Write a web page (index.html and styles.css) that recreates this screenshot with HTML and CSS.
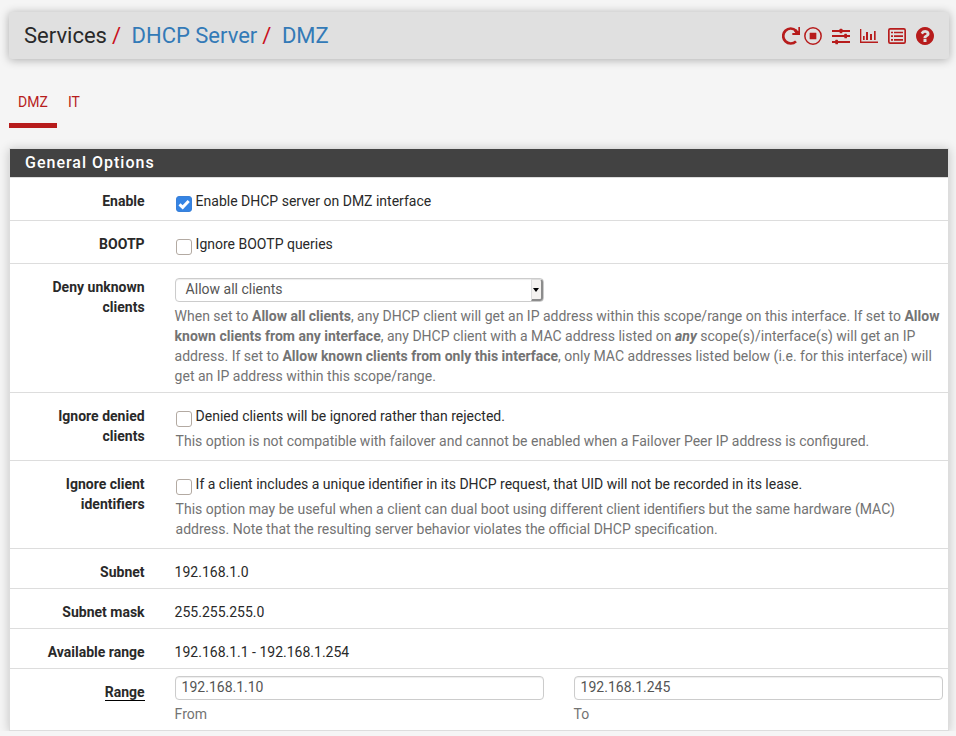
FILE: index.html
```
<!DOCTYPE html>
<html lang="en">
<head>
<meta charset="utf-8">
<title>Services: DHCP Server: DMZ</title>
<link rel="stylesheet" href="styles.css">
</head>
<body>
<header class="topbar">
  <h1 class="crumbs"><span>Services</span><i>/</i><a>DHCP Server</a><i>/</i><a>DMZ</a></h1>
  <nav class="icons">
    <svg viewBox="0 0 54 54"><path d="M42 43A22.500 22.500 0 1 1 42 11" fill="none" stroke="currentColor" stroke-width="8"/><path d="M49 0h5v24H31v-6h9l-4-5 6-6 7 6z"/></svg>
    <svg viewBox="0 0 54 54"><circle cx="27" cy="27" r="24.500" fill="none" stroke="currentColor" stroke-width="4.500"/><rect x="17" y="17" width="20" height="20" rx="1"/></svg>
    <svg viewBox="0 0 54 54"><path d="M0 9h54v6H0zM0 24h54v6H0zM0 42h54v6H0z"/><rect x="23" y="5" width="8" height="14" rx="2"/><rect x="37" y="20" width="8" height="14" rx="2"/><rect x="10" y="38" width="8" height="14" rx="2"/></svg>
    <svg viewBox="0 0 54 54"><path d="M0 6h4v37.500H54V48H0zM9 27h5v12H9zM18 15h6v24h-6zM30 21h6v18h-6zM42 12h5v27h-5z"/></svg>
    <svg viewBox="0 0 54 54"><rect x="2.500" y="5.500" width="49" height="43" rx="4" fill="none" stroke="currentColor" stroke-width="5"/><path d="M9 14h6v5H9zM18 14h27v5H18zM9 25h6v5H9zM18 25h27v5H18zM9 36h6v5H9zM18 36h27v5H18z"/></svg>
    <svg viewBox="128 128 1536 1536"><path d="M1024 1376v-192q0-14-9-23t-23-9h-192q-14 0-23 9t-9 23v192q0 14 9 23t23 9h192q14 0 23-9t9-23zm256-672q0-88-55.500-163t-138.500-116-170-41q-243 0-371 213-15 24 8 42l132 100q7 6 19 6 16 0 25-12 53-68 86-92 34-24 86-24 48 0 85.500 26t37.500 59q0 38-20 61t-68 45q-63 28-115.500 86.500t-52.500 125.500v36q0 14 9 23t23 9h192q14 0 23-9t9-23q0-19 21.500-49.500t54.500-49.500q32-18 49-28.500t46-35 44.500-48 28-60.500 12.500-81zm384 192q0 209-103 385.500t-279.500 279.500-385.500 103-385.500-103-279.500-279.500-103-385.500 103-385.500 279.500-279.500 385.500-103 385.500 103 279.500 279.500 103 385.500z"/></svg>
  </nav>
</header>
<nav class="tabs"><a class="active">DMZ</a><a>IT</a></nav>
<main class="panel">
  <h2>General Options</h2>
  <section class="row h43"><b class="label">Enable</b><div class="field"><label class="check"><span class="box on"><svg viewBox="0 0 16 16"><path d="M3.500 8.300l3.200 3 6-6.300"/></svg></span>Enable DHCP server on DMZ interface</label></div></section>
  <section class="row h43"><b class="label">BOOTP</b><div class="field"><label class="check"><span class="box"></span>Ignore BOOTP queries</label></div></section>
  <section class="row h129"><b class="label">Deny unknown<br>clients</b><div class="field">
    <div class="select"><span>Allow all clients</span><span class="arrow"></span></div>
    <p class="help">When set to <b>Allow all clients</b>, any DHCP client will get an IP address within this scope/range on this interface. If set to <b>Allow<br>known clients from any interface</b>, any DHCP client with a MAC address listed on <b><em>any</em></b> scope(s)/interface(s) will get an IP<br>address. If set to <b>Allow known clients from only this interface</b>, only MAC addresses listed below (i.e. for this interface) will<br>get an IP address within this scope/range.</p></div></section>
  <section class="row h68"><b class="label">Ignore denied<br>clients</b><div class="field"><label class="check"><span class="box"></span>Denied clients will be ignored rather than rejected.</label>
    <p class="help under">This option is not compatible with failover and cannot be enabled when a Failover Peer IP address is configured.</p></div></section>
  <section class="row h88"><b class="label">Ignore client<br>identifiers</b><div class="field"><label class="check"><span class="box"></span>If a client includes a unique identifier in its DHCP request, that UID will not be recorded in its lease.</label>
    <p class="help under">This option may be useful when a client can dual boot using different client identifiers but the same hardware (MAC)<br>address. Note that the resulting server behavior violates the official DHCP specification.</p></div></section>
  <section class="row h40"><b class="label">Subnet</b><div class="field">192.168.1.0</div></section>
  <section class="row h40"><b class="label">Subnet mask</b><div class="field">255.255.255.0</div></section>
  <section class="row h40"><b class="label">Available range</b><div class="field">192.168.1.1 - 192.168.1.254</div></section>
  <section class="row h62"><b class="label"><span class="req">Range</span></b><div class="field range">
    <div><div class="input">192.168.1.10</div><p class="help">From</p></div>
    <div><div class="input">192.168.1.245</div><p class="help">To</p></div></div></section>
</main>
</body>
</html>
```
FILE: styles.css
```
* { box-sizing: border-box; }
html { overflow: hidden; }
body {
  margin: 0;
  padding: 12px 7px 0 9px;
  background: #f5f5f5;
  color: #292929;
  font: 14px/20px Roboto, sans-serif;
  white-space: nowrap;
}
h1, h2, p { margin: 0; }

.topbar {
  display: flex;
  align-items: center;
  justify-content: space-between;
  height: 47px;
  padding: 0 15px;
  background: #e0e0e0;
  border-radius: 3px;
  box-shadow: 0 1px 10px rgba(0, 0, 0, .3);
}
.crumbs { font-size: 22px; line-height: 24px; font-weight: 400; }
.crumbs a { color: #337ab7; }
.crumbs i { color: #c9101c; font-style: normal; margin: 0 10.5px 0 5px; }
.icons { display: flex; gap: 10px; color: #b71c1c; padding-top: 1px; }
.icons svg { width: 18px; height: 18px; fill: currentColor; }
.icons svg:first-child { margin-right: -6px; }

.tabs { display: flex; height: 69px; margin-top: 20px; color: #b71c1c; }
.tabs a { height: 49px; padding: 13px 9px 0; }
.tabs a + a { padding-left: 11px; }
.tabs .active { width: 48px; border-bottom: 5px solid #b71c1c; }

.panel {
  width: 940px;
  background: #fff;
  border: 1px solid #ddd;
  box-shadow: 0 1px 10px rgba(0, 0, 0, .2);
}
.panel h2 {
  height: 29px;
  padding: 4px 15px;
  background: #424242;
  border-bottom: 1px solid #ddd;
  color: #fff;
  font-size: 16px;
  line-height: 20px;
  font-weight: 500;
  letter-spacing: 1px;
}
.row {
  display: grid;
  grid-template-columns: 134.6px 768px;
  column-gap: 30px;
  padding-top: 13px;
  border-bottom: 1px solid #ddd;
}
.row:last-child { border-bottom: 0; }
.label { text-align: right; }
.h40 { height: 40px; }
.h43 { height: 43px; }
.h62 { height: 61px; }
.h68 { height: 68px; }
.h88 { height: 88px; }
.h129 { height: 129px; }

.check { display: flex; }
.box {
  width: 16px;
  height: 16px;
  margin: 5px 4px 0 1px;
  border: 1px solid #b3aaa2;
  border-radius: 3px;
  background: #fff;
}
.box.on { background: #3584e4; border-color: #3a80d8; }
.box svg {
  display: block;
  width: 16px;
  height: 16px;
  margin: -1px;
  fill: none;
  stroke: #fff;
  stroke-width: 3;
}
.help { color: #737373; }
.under { margin: 4px 0 0 1px; }

.select, .input {
  width: 369px;
  height: 24px;
  border: 1px solid #ccc;
  border-radius: 4px;
  background: #fff;
  box-shadow: inset 0 1px 1px rgba(0, 0, 0, .075);
  color: #555;
  line-height: 20px;
}
.select {
  display: flex;
  justify-content: space-between;
  margin: 1px 0 4px;
  padding-left: 10px;
}
.arrow {
  display: grid;
  place-items: center;
  width: 12px;
  height: 22px;
  background: #f4f2f0;
  border: 1px solid #ddd;
  border-right: 2px solid #8c8c8c;
  border-bottom: 2px solid #8c8c8c;
  border-radius: 0 3px 3px 0;
}
.arrow::after {
  content: "";
  border: 3.5px solid transparent;
  border-top: 4px solid #000;
  border-bottom: 0;
}
.range { display: flex; gap: 30px; margin-top: -6px; }
.input { padding-left: 6px; margin-bottom: 4px; }
.req { display: inline-block; height: 19px; border-bottom: 1px solid #000; }
```
